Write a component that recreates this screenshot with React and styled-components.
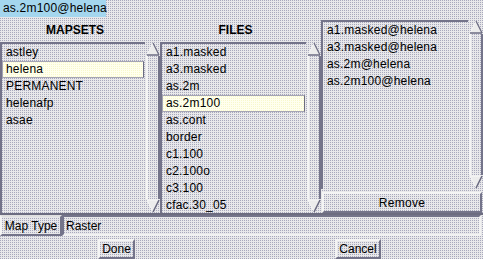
import React from 'react'
import styled, { createGlobalStyle, css } from 'styled-components'

const dither = (light, dark) => css`
  background: linear-gradient(90deg, transparent 1px, ${light} 1px) 0 0 / 2px 2px,
    linear-gradient(transparent 1px, ${light} 1px) 0 0 / 2px 2px, ${dark};
`

const sunken = css`
  border-style: solid;
  border-width: 2px;
  border-color: #74748a #f2f2f2 #f2f2f2 #74748a;
`

const raised = css`
  border-style: solid;
  border-width: 2px;
  border-color: #f4f4f4 #74748a #74748a #f4f4f4;
`

const GlobalStyle = createGlobalStyle`
  html, body { margin: 0; padding: 0; }
  body {
    font-family: "Liberation Sans", Arial, sans-serif;
    font-size: 12px;
    color: #000;
  }
`

const mapsets = ['astley', 'helena', 'PERMANENT', 'helenafp', 'asae']
const files = [
  'a1.masked',
  'a3.masked',
  'as.2m',
  'as.2m100',
  'as.cont',
  'border',
  'c1.100',
  'c2.100o',
  'c3.100',
  'cfac.30_05',
]
const chosen = ['a1.masked@helena', 'a3.masked@helena', 'as.2m@helena', 'as.2m100@helena']

const Arrow = ({ down }) => (
  <svg width="14" height="14" viewBox="0 0 14 14">
    {down ? (
      <>
        <polygon points="1,1 13,1 7,13" fill="#ececec" stroke="#f8f8f8" strokeWidth="1" />
        <line x1="13" y1="1" x2="7" y2="13" stroke="#6a6a80" strokeWidth="1.5" />
      </>
    ) : (
      <>
        <polygon points="7,1 13,13 1,13" fill="#ececec" stroke="#f8f8f8" strokeWidth="1" />
        <line x1="7" y1="1" x2="13" y2="13" stroke="#6a6a80" strokeWidth="1.2" />
        <line x1="1" y1="13" x2="13" y2="13" stroke="#6a6a80" strokeWidth="1.5" />
      </>
    )}
  </svg>
)

const Scroller = () => (
  <ScrollBar>
    <Arrow />
    <Slider />
    <Arrow down />
  </ScrollBar>
)

const ListPanel = ({ items, selected }) => (
  <ListArea>
    <ListBox>
      {items.map((it) => (
        <Item key={it} $selected={it === selected}>
          {it}
        </Item>
      ))}
    </ListBox>
    <Scroller />
  </ListArea>
)

const App = () => (
  <Page>
    <GlobalStyle />
    <TopEntry>
      <Selection>as.2m100@helena</Selection>
    </TopEntry>
    <Main>
      <Column $width={160}>
        <Header>MAPSETS</Header>
        <ListPanel items={mapsets} selected="helena" />
      </Column>
      <Column $width={161}>
        <Header>FILES</Header>
        <ListPanel items={files} selected="as.2m100" />
      </Column>
      <RightColumn>
        <ListPanel items={chosen} />
        <WideButton>Remove</WideButton>
      </RightColumn>
    </Main>
    <TypeRow>
      <TypeLabel>Map Type</TypeLabel>
      <TypeEntry>Raster</TypeEntry>
    </TypeRow>
    <ButtonRow>
      <Cell>
        <Button>Done</Button>
      </Cell>
      <Cell>
        <Button>Cancel</Button>
      </Cell>
    </ButtonRow>
  </Page>
)

export default App

const Page = styled.div`
  width: 483px;
  height: 259px;
  display: flex;
  flex-direction: column;
  overflow: hidden;
  ${dither('#e8e8ea', '#a8a8bc')}
`

const TopEntry = styled.div`
  height: 17px;
  display: flex;
  align-items: stretch;
`

const Selection = styled.span`
  width: 103px;
  padding-left: 3px;
  line-height: 16px;
  background: #a4d6ee;
  letter-spacing: 0.2px;
`

const Main = styled.div`
  height: 196px;
  display: flex;
  border-bottom: 2px solid #6c6c80;
`

const Column = styled.div`
  width: ${(p) => p.$width}px;
  display: flex;
  flex-direction: column;
`

const RightColumn = styled.div`
  flex: 1;
  display: flex;
  flex-direction: column;
  padding-top: 3px;
`

const Header = styled.div`
  height: 25px;
  display: flex;
  align-items: center;
  justify-content: center;
  font-weight: bold;
  padding-right: 10px;
`

const ListArea = styled.div`
  flex: 1;
  display: flex;
  min-height: 0;
`

const ListBox = styled.div`
  flex: 1;
  ${sunken}
  border-bottom: none;
  border-right: none;
  padding: 0 1px 0 0;
  overflow: hidden;
  letter-spacing: 0.2px;
`

const Item = styled.div`
  height: 17px;
  line-height: 17px;
  padding-left: 4px;
  white-space: nowrap;
  box-sizing: border-box;
  ${(p) =>
    p.$selected &&
    css`
      border: 1px solid #a4a4b4;
      border-right-color: #6c6c80;
      line-height: 15px;
      padding-left: 3px;
      ${dither('#ffffee', '#f8f8cc')}
    `}
`

const ScrollBar = styled.div`
  width: 14px;
  margin-left: 1px;
  display: flex;
  flex-direction: column;
`

const Slider = styled.div`
  flex: 1;
  border-left: 2px solid #f4f4f4;
  border-right: 2px solid #74748a;
`

const WideButton = styled.div`
  height: 17px;
  margin: 3px 1px 0 1px;
  ${raised}
  display: flex;
  align-items: center;
  justify-content: center;
  letter-spacing: 0.3px;
`

const TypeRow = styled.div`
  height: 21px;
  display: flex;
`

const TypeLabel = styled.div`
  width: 58px;
  ${raised}
  border-top-color: #e0e0e0;
  display: flex;
  align-items: center;
  justify-content: center;
  white-space: nowrap;
`

const TypeEntry = styled.div`
  flex: 1;
  margin-right: 2px;
  ${sunken}
  padding-left: 2px;
  display: flex;
  align-items: center;
`

const ButtonRow = styled.div`
  flex: 1;
  display: grid;
  grid-template-columns: 233px 1fr;
  align-items: center;
`

const Cell = styled.div`
  display: flex;
  justify-content: center;
`

const Button = styled.div`
  height: 16px;
  padding: 0 2px;
  ${raised}
  display: flex;
  align-items: center;
  margin-top: 2px;
`
